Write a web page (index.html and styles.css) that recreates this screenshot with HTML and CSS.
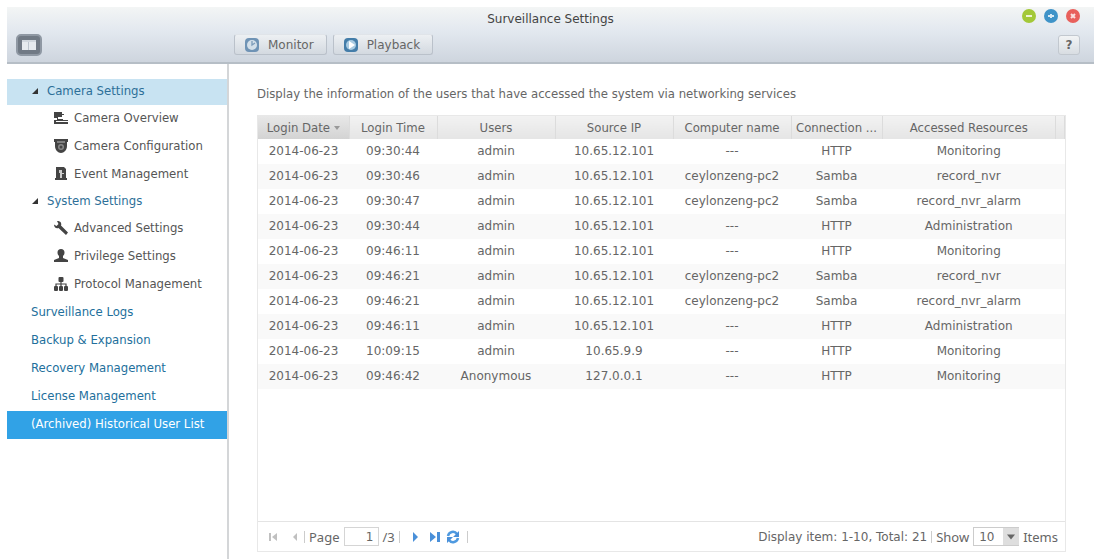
FILE: index.html
```html
<!DOCTYPE html>
<html lang="en">
<head>
<meta charset="utf-8">
<title>Surveillance Settings</title>
<link rel="stylesheet" href="styles.css">
</head>
<body>
<div class="window">
  <header class="chrome">
    <div class="titlebar">
      <h1 class="title">Surveillance Settings</h1>
      <div class="controls">
        <button class="dot green" aria-label="Minimize"><svg viewBox="0 0 14 14"><path d="M4 7h6"/></svg></button>
        <button class="dot blue" aria-label="Maximize"><svg viewBox="0 0 14 14"><path d="M4 7h6M7 5v4"/></svg></button>
        <button class="dot red" aria-label="Close"><svg viewBox="0 0 14 14"><path d="M5 5l4 4M9 5l-4 4"/></svg></button>
      </div>
    </div>
    <div class="toolbar">
      <div class="toolbar-side">
        <button class="panel-toggle" aria-label="Toggle side panel">
          <svg viewBox="0 0 26 22"><rect x="1" y="1" width="24" height="20" rx="4" fill="#717a85" stroke="#8f98a3" stroke-width="2"/><rect x="6" y="6" width="14" height="10" fill="#e6eaee"/><path d="M12.500 8v8M6 7h14" stroke="#bcc4cd"/></svg>
        </button>
      </div>
      <button class="tool">
        <svg viewBox="0 0 16 16"><rect x="1" y="1" width="14" height="14" rx="4" fill="#6f93b5"/><circle cx="8" cy="8" r="5" fill="#d3dfe9"/><path d="M8 4v4l3-2" fill="none" stroke="#7c9bb9" stroke-width="1.300"/></svg>
        Monitor
      </button>
      <button class="tool">
        <svg viewBox="0 0 16 16"><rect x="1" y="1" width="14" height="14" rx="4" fill="#447da9"/><circle cx="8" cy="8" r="5" fill="#a9cbe2"/><path d="M6 4l6 4-6 4z" fill="#fff"/></svg>
        Playback
      </button>
      <button class="help" aria-label="Help">?</button>
    </div>
  </header>

  <div class="body">
    <nav class="sidebar" aria-label="Settings">
      <a class="heading current" href="#camera"><svg class="arrow" viewBox="0 0 6 6"><path d="M6 0v6H0z"/></svg>Camera Settings</a>
      <a class="child" href="#overview"><svg class="icon" viewBox="0 0 14 14"><path d="M0 1h8v2h2v1H8v2H4v2h5v1H3V7H0zM0 9h9v1H2v1h12v2H0z"/><path d="M9 9h5v1H9z"/></svg>Camera Overview</a>
      <a class="child" href="#configuration"><svg class="icon" viewBox="0 0 14 14"><path d="M0 0h14v3h-1v4c0 4-3 7-6 7s-6-3-6-7V3H0z"/><circle cx="7" cy="8" r="3" fill="#888"/><circle cx="7" cy="8" r="1.500"/><path d="M3 3h8" stroke="#bbb"/></svg>Camera Configuration</a>
      <a class="child" href="#events"><svg class="icon" viewBox="0 0 14 14"><path d="M2 0h8l2 2v9h1v2H1v-2h1z"/><path d="M5 3h3v3h2v1H8v4H6V6H5z" fill="#ccc"/></svg>Event Management</a>
      <a class="heading" href="#system"><svg class="arrow" viewBox="0 0 6 6"><path d="M6 0v6H0z"/></svg>System Settings</a>
      <a class="child" href="#advanced"><svg class="icon" viewBox="0 0 14 14"><path d="M3 0c3-.5 5 2 4 4.500l7 7-2 2.500-7.500-7C2 8 0 6 0 3.500l2.500 1.500L4.500 3z"/></svg>Advanced Settings</a>
      <a class="child" href="#privilege"><svg class="icon" viewBox="0 0 14 14"><path d="M7 0c2.200 0 3.500 1.500 3.500 3.500C10.500 5 10 6 9 7v2l5 2v2H0v-2l5-2V7C4 6 3.500 5 3.500 3.500 3.500 1.500 4.800 0 7 0z"/></svg>Privilege Settings</a>
      <a class="child" href="#protocol"><svg class="icon" viewBox="0 0 14 14"><rect x="4.500" width="5" height="5" rx="1"/><rect y="9" width="4" height="5" rx="1"/><rect x="5" y="9" width="4" height="5" rx="1"/><rect x="10" y="9" width="4" height="5" rx="1"/><path d="M7 4v5M2 10V7h10v3" fill="none" stroke="#444" stroke-width="1.200"/></svg>Protocol Management</a>
      <a class="link" href="#logs">Surveillance Logs</a>
      <a class="link" href="#backup">Backup &amp; Expansion</a>
      <a class="link" href="#recovery">Recovery Management</a>
      <a class="link" href="#license">License Management</a>
      <a class="link selected" href="#history" aria-current="page">(Archived) Historical User List</a>
    </nav>

    <main class="content">
      <p class="intro">Display the information of the users that have accessed the system via networking services</p>
      <section class="grid">
        <div class="rows">
          <table>
            <colgroup><col class="c-date"><col class="c-time"><col class="c-wide"><col class="c-wide"><col class="c-wide"><col class="c-date"><col><col class="c-end"></colgroup>
            <thead><tr><th class="sorted">Login Date <svg class="sort" viewBox="0 0 6 4"><path d="M0 0h6L3 4z"/></svg></th><th>Login Time</th><th>Users</th><th>Source IP</th><th>Computer name</th><th>Connection ...</th><th>Accessed Resources</th><td></td></tr></thead>
            <tbody>
              <tr><td>2014-06-23</td><td>09:30:44</td><td>admin</td><td>10.65.12.101</td><td>---</td><td>HTTP</td><td>Monitoring</td><td></td></tr>
              <tr><td>2014-06-23</td><td>09:30:46</td><td>admin</td><td>10.65.12.101</td><td>ceylonzeng-pc2</td><td>Samba</td><td>record_nvr</td><td></td></tr>
              <tr><td>2014-06-23</td><td>09:30:47</td><td>admin</td><td>10.65.12.101</td><td>ceylonzeng-pc2</td><td>Samba</td><td>record_nvr_alarm</td><td></td></tr>
              <tr><td>2014-06-23</td><td>09:30:44</td><td>admin</td><td>10.65.12.101</td><td>---</td><td>HTTP</td><td>Administration</td><td></td></tr>
              <tr><td>2014-06-23</td><td>09:46:11</td><td>admin</td><td>10.65.12.101</td><td>---</td><td>HTTP</td><td>Monitoring</td><td></td></tr>
              <tr><td>2014-06-23</td><td>09:46:21</td><td>admin</td><td>10.65.12.101</td><td>ceylonzeng-pc2</td><td>Samba</td><td>record_nvr</td><td></td></tr>
              <tr><td>2014-06-23</td><td>09:46:21</td><td>admin</td><td>10.65.12.101</td><td>ceylonzeng-pc2</td><td>Samba</td><td>record_nvr_alarm</td><td></td></tr>
              <tr><td>2014-06-23</td><td>09:46:11</td><td>admin</td><td>10.65.12.101</td><td>---</td><td>HTTP</td><td>Administration</td><td></td></tr>
              <tr><td>2014-06-23</td><td>10:09:15</td><td>admin</td><td>10.65.9.9</td><td>---</td><td>HTTP</td><td>Monitoring</td><td></td></tr>
              <tr><td>2014-06-23</td><td>09:46:42</td><td>Anonymous</td><td>127.0.0.1</td><td>---</td><td>HTTP</td><td>Monitoring</td><td></td></tr>
            </tbody>
          </table>
        </div>
        <footer class="pager">
          <button class="nav-btn first" aria-label="First page" disabled><svg viewBox="0 0 10 10"><path d="M1 1h2v8H1zM9 1v8L4 5z"/></svg></button>
          <button class="nav-btn" aria-label="Previous page" disabled><svg viewBox="0 0 10 10"><path d="M7 1v8L3 5z"/></svg></button>
          <span class="rule"></span>
          <label for="page">Page</label>
          <input id="page" class="page-input" type="text" value="1">
          <span class="count">/3</span>
          <span class="rule"></span>
          <button class="nav-btn next" aria-label="Next page"><svg viewBox="0 0 10 10"><path d="M3 0v10l5-5z"/></svg></button>
          <button class="nav-btn last" aria-label="Last page"><svg viewBox="0 0 10 10"><path d="M0 0v10l6-5zM7 0h3v10H7z"/></svg></button>
          <button class="nav-btn refresh" aria-label="Refresh"><svg viewBox="0 0 14 14"><path d="M2 6a5 5 0 0 1 9-2M12 8a5 5 0 0 1-9 2" fill="none" stroke="#4f9ae0" stroke-width="2.500"/><path d="M13 1v6H7zM1 13V7h6z"/></svg></button>
          <span class="rule"></span>
          <span class="summary">Display item: 1-10, Total: 21</span>
          <span class="rule"></span>
          <label for="size">Show</label>
          <span class="select-wrap">
            <select id="size"><option>10</option><option>20</option><option>50</option></select>
            <svg class="caret" viewBox="0 0 16 16"><path d="M4 6l4 5 4-5z"/></svg>
          </span>
          <span class="items">Items</span>
        </footer>
      </section>
    </main>
  </div>
</div>
</body>
</html>
```

FILE: styles.css
```css
* { box-sizing: border-box; }

body {
  margin: 0;
  background: #fff;
  color: #666;
  font: 13px/20px "DejaVu Sans Condensed", "Noto Sans", sans-serif;
}

button, input, select { font: inherit; color: inherit; margin: 0; padding: 0; }
button { border: 0; background: none; }
svg { display: block; flex: none; }

.window {
  display: flex;
  flex-direction: column;
  min-height: 100vh;
  padding: 7px 4px 0 7px;
}

/* Title bar and toolbar */
.chrome {
  background: linear-gradient(#f3f5f5, #e2e8ef 45%, #ced5de);
  border-bottom: 2px solid #b6bec6;
}
.titlebar {
  display: grid;
  grid-template-columns: 1fr auto 1fr;
  height: 24px;
}
.title {
  grid-column: 2;
  margin: 0;
  font: 12px/24px "DejaVu Sans", sans-serif;
  color: #444;
}
.controls {
  display: flex;
  justify-content: flex-end;
  gap: 8px;
  padding: 2px 14px 0 0;
}
.dot { width: 14px; height: 14px; border-radius: 50%; }
.dot svg { fill: none; stroke: #fff; stroke-opacity: 0.8; stroke-width: 2; }
.green { background: #a3c838; }
.blue { background: #3f93c8; }
.red { background: #e8605c; }

.toolbar {
  display: flex;
  align-items: center;
  gap: 6px;
  height: 31px;
  padding: 0 14px 4px 9px;
}
.toolbar-side { width: 212px; }
.panel-toggle { display: block; }
.panel-toggle svg { width: 26px; height: 22px; }
.tool {
  display: flex;
  align-items: center;
  gap: 8px;
  height: 21px;
  padding: 0 12px 0 9px;
  border: 1px solid #bac1ca;
  border-top-color: #e0e4e9;
  border-radius: 3px;
  background: linear-gradient(#edf0f3, #d3d9e0);
  font: 12px/18px "DejaVu Sans", sans-serif;
}
.tool svg { width: 16px; height: 16px; }
.help {
  width: 22px;
  height: 20px;
  margin-left: auto;
  border: 1px solid #c2c8cf;
  border-radius: 3px;
  background: linear-gradient(#f2f4f5, #d8dde2);
  font: bold 12px/16px "DejaVu Sans", sans-serif;
}

.body { display: flex; flex: 1; }

/* Side navigation */
.sidebar {
  display: flex;
  flex-direction: column;
  width: 222px;
  padding-top: 15px;
  border-right: 2px solid #d4d6d8;
}
.sidebar a {
  display: flex;
  align-items: center;
  padding-bottom: 2px;
  text-decoration: none;
  white-space: nowrap;
}
.sidebar .heading {
  gap: 9px;
  height: 26px;
  padding-left: 25px;
  color: #2d6f98;
}
.sidebar .current { background: #c8e3f2; }
.sidebar .child {
  gap: 6px;
  height: 28px;
  padding-left: 47px;
  color: #555;
}
.sidebar .link {
  height: 28px;
  padding-left: 24px;
  color: #226f9c;
}
.sidebar .selected { background: #31a2e6; color: #fff; }
.arrow { width: 6px; height: 6px; fill: #333; }
.icon { width: 14px; height: 14px; fill: #444; }

/* Main area */
.content {
  display: flex;
  flex: 1;
  flex-direction: column;
  min-width: 0;
  padding: 20px 28px 7px;
}
.intro { margin: 0 0 11px; line-height: 20px; }
.grid {
  display: flex;
  flex: 1;
  flex-direction: column;
  border: 1px solid #e8e8e8;
}
.rows { flex: 1; }
table {
  width: 100%;
  table-layout: fixed;
  border-collapse: collapse;
}
.c-date { width: 91px; }
.c-time { width: 88px; }
.c-wide { width: 118px; }
.c-end { width: 9px; }
th, td { padding: 0; text-align: center; white-space: nowrap; }
thead th, thead td {
  height: 23px;
  border-right: 1px solid #dcdcdc;
  background: linear-gradient(#f2f2f2, #e5e5e5);
  font-weight: normal;
}
thead .sorted { background: linear-gradient(#e8e8e8, #d3d3d3); }
.sort { display: inline-block; width: 6px; height: 4px; fill: #999; vertical-align: middle; }
tbody td {
  height: 25px;
  font: 12px/25px "DejaVu Sans", sans-serif;
}
tbody tr:nth-child(even) { background: #f9f9f9; }

/* Paging bar */
.pager {
  display: flex;
  align-items: center;
  gap: 4px;
  height: 30px;
  padding: 0 7px 0 10px;
  border-top: 1px solid #e4e4e4;
  font: 13px/18px "Noto Sans", sans-serif;
}
.nav-btn svg { width: 10px; height: 10px; fill: #4a90d9; }
.nav-btn:disabled svg { fill: #c0c0c0; }
.first { margin-right: 8px; }
.next { margin: 0 6px; }
.last { margin-right: 2px; }
.refresh { margin-right: 3px; }
.refresh svg { width: 14px; height: 14px; }
.rule { width: 1px; height: 12px; background: #ccc; }
.page-input {
  width: 35px;
  height: 19px;
  padding-right: 4px;
  border: 1px solid #d5d5d5;
  background: #fff;
  text-align: right;
}
.page-input, .summary, .select-wrap { font: 12px/18px "DejaVu Sans", sans-serif; }
.summary { margin-left: auto; }
.select-wrap { display: grid; }
.select-wrap > * { grid-area: 1 / 1; }
.select-wrap select {
  width: 46px;
  height: 19px;
  padding-left: 5px;
  border: 1px solid #ccc;
  border-radius: 0;
  background: #fff;
  appearance: none;
}
.caret {
  align-self: center;
  justify-self: end;
  width: 16px;
  height: 17px;
  background: #dedede;
  fill: #666;
  pointer-events: none;
}
```
